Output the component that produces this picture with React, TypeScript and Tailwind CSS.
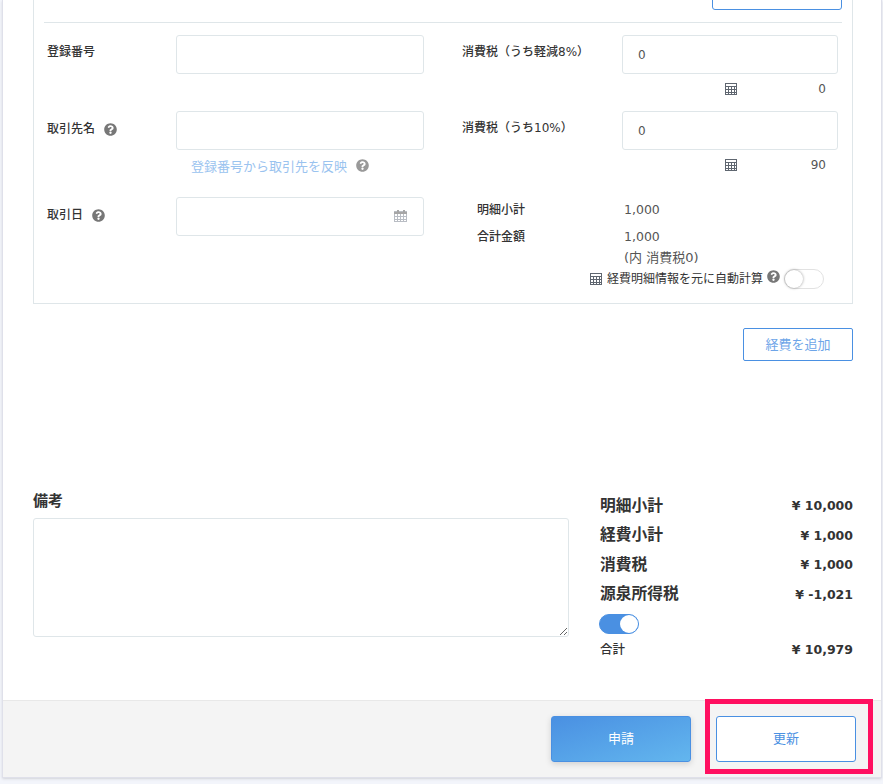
const FONT = '[font-family:"DejaVu_Sans","Noto_Sans_CJK_JP",sans-serif]'

function Help({ className = '' }: { className?: string }) {
  return (
    <svg viewBox="0 0 512 512" className={`w-[13px] h-[13px] shrink-0 ${className}`} fill="currentColor">
      <path d="M504 256c0 137-111 248-248 248S8 393 8 256 119 8 256 8s248 111 248 248zM262.700 90c-54.500 0-89.300 23-116.500 63.800-3.500 5.300-2.400 12.400 2.700 16.300l34.700 26.300c5.200 3.900 12.600 3 16.700-2.100 17.900-22.700 30.100-35.800 57.300-35.800 20.400 0 45.700 13.100 45.700 32.900 0 15-12.400 22.700-32.500 34-23.500 13.200-54.600 29.600-54.600 70.600V300c0 6.600 5.400 12 12 12h56c6.600 0 12-5.400 12-12v-1.300c0-28.400 83-29.600 83-106.700 0-58-60.200-102-116.500-102zM256 338c-25.400 0-46 20.600-46 46 0 25.400 20.600 46 46 46s46-20.600 46-46c0-25.400-20.600-46-46-46z" />
    </svg>
  )
}

function Calc({ className = '' }: { className?: string }) {
  return (
    <svg viewBox="0 0 12 12" className={`w-3 h-3 shrink-0 ${className}`} fill="none" stroke="#5f6670" strokeWidth="1" shapeRendering="crispEdges">
      <rect x="0.500" y="0.500" width="11" height="11" />
      <path d="M0.500 3.500h11M0.500 6.500h11M0.500 9.500h11M3.500 3.500v8M6.500 3.500v8M9.500 3.500v8" />
    </svg>
  )
}

function CalendarIcon({ className = '' }: { className?: string }) {
  return (
    <svg viewBox="0 0 13 13" className={`w-[13px] h-[13px] ${className}`} fill="none" stroke="#b9bdc4" strokeWidth="1" shapeRendering="crispEdges">
      <rect x="0.500" y="2.500" width="12" height="10" />
      <path d="M0 3.500h13M0 4.500h13" stroke="#a6a6a6" />
      <path d="M0.500 7.500h12M0.500 10h12M3.500 5v8M6.500 5v8M9.500 5v8" />
      <path d="M3.500 0.500v3M9.500 0.500v3" stroke="#a6a6a6" strokeWidth="2" />
    </svg>
  )
}

function Field({ value, right }: { value?: string; right?: React.ReactNode }) {
  return (
    <div className="relative w-full">
      <input
        readOnly
        value={value ?? ''}
        className="w-full h-[39px] border border-[#dfe6e9] rounded-[3px] pl-[15px] pr-3 text-xs text-[#555] bg-white outline-none"
      />
      {right}
    </div>
  )
}

function Toggle({ on }: { on: boolean }) {
  return (
    <div
      className={`w-10 h-5 rounded-full flex items-center border ${
        on ? 'bg-[#4a90e2] border-[#4a90e2] justify-end' : 'bg-white border-[#e2e2e2] justify-start'
      }`}
    >
      <div className={`w-[18px] h-[18px] rounded-full bg-white ${on ? '' : 'shadow-[0_0_3px_rgba(0,0,0,0.4)]'}`} />
    </div>
  )
}

function SumRow({ label, value }: { label: string; value: string }) {
  return (
    <div className="flex items-center justify-between h-[29.5px]">
      <span className="text-[15.75px] font-bold text-[#333]">{label}</span>
      <span className="text-[12.5px] font-bold text-[#333] mt-[2px]">{value}</span>
    </div>
  )
}

export default function App() {
  return (
    <div className={`h-[784px] overflow-hidden bg-[#f3f5fb] relative text-[#333] ${FONT}`}>
      <div className="ml-[2px] w-[880px] h-[778px] bg-white border-x border-b border-[#dfe0ea] shadow-sm flex flex-col overflow-hidden">
        <div className="pl-[30px] pr-[28px] flex-1">
          {/* expense box, its top lies above the fold */}
          <div className="-mt-[40px] border border-[#dfe6e9] px-[10px] h-[344px]">
            <div className="flex justify-end h-[62px] border-b border-[#dfe6e9]">
              <div className="w-[130px] h-[38px] mt-[11px] border border-[#4a90e2] rounded-[3px]" />
            </div>
            <div className="flex pt-3">
              <div className="w-[380px] pl-[3px] shrink-0">
                <div className="flex mb-[37px]">
                  <div className="w-[129px] text-xs font-medium pt-[9px] h-[39px]">登録番号</div>
                  <div className="w-[248px]"><Field /></div>
                </div>
                <div className="flex">
                  <div className="w-[129px] text-xs font-medium pt-[10px] flex items-start gap-[9px] h-[39px] text-[#333]">
                    <span>取引先名</span>
                    <Help className="mt-[2px] text-[#777]" />
                  </div>
                  <div className="w-[248px]"><Field /></div>
                </div>
                <div className="ml-[144px] h-[47px] pt-[7px] flex items-start gap-[9px] text-[13px] text-[#9ac3ef]">
                  <span>登録番号から取引先を反映</span>
                  <Help className="mt-[2px] text-[#999]" />
                </div>
                <div className="flex">
                  <div className="w-[129px] text-xs font-medium pt-[10px] flex items-start gap-[9px] h-[39px]">
                    <span>取引日</span>
                    <Help className="mt-[2px] text-[#777]" />
                  </div>
                  <div className="w-[248px]">
                    <Field right={<CalendarIcon className="absolute right-[17px] top-[12px]" />} />
                  </div>
                </div>
              </div>

              <div className="flex-1 pl-[38px]">
                <div className="flex">
                  <div className="w-[160px] text-xs font-medium pt-[9px] whitespace-nowrap">消費税（うち軽減8%）</div>
                  <div className="w-[216px]"><Field value="0" /></div>
                </div>
                <div className="flex justify-end items-center h-[30px] pr-[16px] mb-[7px] text-xs text-[#555]">
                  <Calc className="mr-[81px]" />
                  <span>0</span>
                </div>
                <div className="flex">
                  <div className="w-[160px] text-xs font-medium pt-[9px] whitespace-nowrap">消費税（うち10%）</div>
                  <div className="w-[216px]"><Field value="0" /></div>
                </div>
                <div className="flex justify-end items-center h-[30px] pr-[16px] text-xs text-[#555]">
                  <Calc className="mr-[74px]" />
                  <span>90</span>
                </div>
                <div className="flex pl-[15px] mt-[22px] text-xs h-[27px]">
                  <span className="w-[147px] font-medium">明細小計</span>
                  <span className="text-[#555] text-[12.5px]">1,000</span>
                </div>
                <div className="flex pl-[15px] text-xs">
                  <span className="w-[147px] font-medium">合計金額</span>
                  <div className="text-[#555] text-[12.5px]">
                    <div>1,000</div>
                    <div className="mt-[3px] text-[13px] whitespace-nowrap">(内 消費税0)</div>
                  </div>
                </div>
                <div className="flex items-center justify-end pr-[18px] mt-[3px] text-xs">
                  <Calc className="mr-[5px]" />
                  <span>経費明細情報を元に自動計算</span>
                  <Help className="mx-1 -mt-1 w-3 h-3 text-[#777]" />
                  <Toggle on={false} />
                </div>
              </div>
            </div>
          </div>

          <div className="flex justify-end mt-[24px]">
            <button className="w-[110px] h-[33px] border border-[#4a90e2] rounded-[2px] text-[13px] text-[#6ea5e8] bg-white">
              経費を追加
            </button>
          </div>

          <div className="flex mt-[129px]">
            <div className="w-[536px] shrink-0">
              <div className="text-[15px] font-bold h-[28px]">備考</div>
              <textarea className="block w-[536px] h-[119px] border border-[#dfe6e9] rounded-[3px] outline-none" />
            </div>
            <div className="ml-[31px] flex-1 pt-[1px]">
              <SumRow label="明細小計" value="¥ 10,000" />
              <SumRow label="経費小計" value="¥ 1,000" />
              <SumRow label="消費税" value="¥ 1,000" />
              <SumRow label="源泉所得税" value="¥ -1,021" />
              <div className="mt-[5px] -ml-[1px]"><Toggle on /></div>
              <div className="flex items-center justify-between mt-[6px] h-[20px]">
                <span className="text-[12.5px] font-medium">合計</span>
                <span className="text-[12.5px] font-bold">¥ 10,979</span>
              </div>
            </div>
          </div>
        </div>

        <div className="h-[77px] shrink-0 bg-[#f4f4f4] border-t border-[#e8e8e8] flex justify-end gap-[25px] pt-[15px] pr-[25px]">
          <button className="w-[140px] h-[46px] rounded-[3px] text-[13px] text-white bg-gradient-to-br from-[#4a90e2] to-[#63b6ee] border border-[#4a90e2] shadow-[0_2px_6px_rgba(0,0,0,0.15)]">
            申請
          </button>
          <button className="w-[140px] h-[46px] rounded-[3px] text-[13px] text-[#4a90e2] bg-white border border-[#4a90e2]">
            更新
          </button>
        </div>
      </div>

      {/* annotation frame around the update button */}
      <div className="absolute left-[705px] top-[699px] w-[168px] h-[75px] border-[5px] border-[#ff1060]" />
    </div>
  )
}
